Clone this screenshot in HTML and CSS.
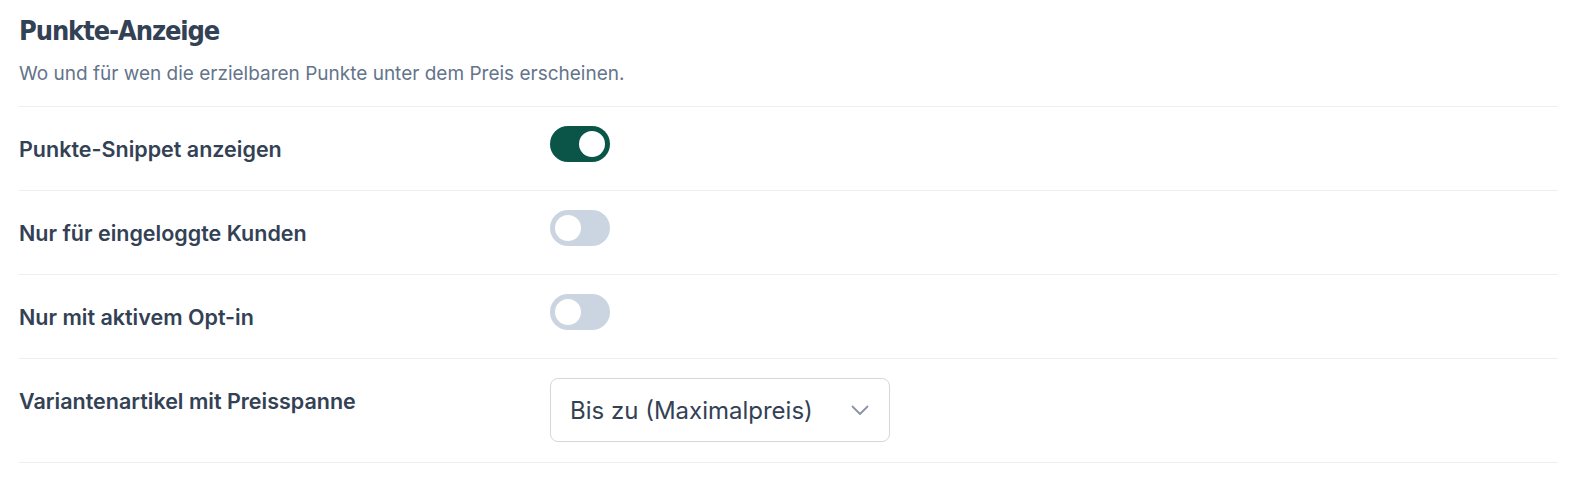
FILE: index.html
```html
<!doctype html>
<html lang="de">
    <head>
        <meta charset="utf-8">
        <meta name="viewport" content="width=device-width, initial-scale=1">
        <title>Punkte-Anzeige</title>
        <link rel="stylesheet" href="styles.css">
    </head>
    <body>
        <section class="einstellungen">
            <header class="kopf">
                <h2>Punkte-Anzeige</h2>
                <p>Wo und für wen die erzielbaren Punkte unter dem Preis erscheinen.</p>
            </header>

            <div class="zeile">
                <label class="beschriftung" for="snippet">Punkte-Snippet anzeigen</label>
                <div class="steuerung">
                    <label class="schalter">
                        <input type="checkbox" id="snippet" checked>
                        <span class="regler"></span>
                    </label>
                </div>
            </div>

            <div class="zeile">
                <label class="beschriftung" for="eingeloggt">Nur für eingeloggte Kunden</label>
                <div class="steuerung">
                    <label class="schalter">
                        <input type="checkbox" id="eingeloggt">
                        <span class="regler"></span>
                    </label>
                </div>
            </div>

            <div class="zeile">
                <label class="beschriftung" for="optin">Nur mit aktivem Opt-in</label>
                <div class="steuerung">
                    <label class="schalter">
                        <input type="checkbox" id="optin">
                        <span class="regler"></span>
                    </label>
                </div>
            </div>

            <div class="zeile">
                <label class="beschriftung" for="spanne">Variantenartikel mit Preisspanne</label>
                <div class="steuerung">
                    <div class="auswahl">
                        <select id="spanne">
                            <option selected>Bis zu (Maximalpreis)</option>
                            <option>Ab (Minimalpreis)</option>
                        </select>
                        <svg class="pfeil" width="24" height="24" viewBox="0 0 24 24" fill="none" stroke="currentColor" stroke-width="1.8" stroke-linecap="round" stroke-linejoin="round">
                            <path d="M4.5 8.5l7.5 7.5 7.5-7.5"/>
                        </svg>
                    </div>
                </div>
            </div>
        </section>
    </body>
</html>
```

FILE: styles.css
```css
:root {
    --text-dunkel: #334155;
    --text-grau: #64748b;
    --linie: #eceef1;
    --gruen: #0a5448;
    --aus: #cbd5e1;
}

body {
    margin: 0;
    padding: 0;
    font-family: Inter, "Noto Sans", sans-serif;
    color: var(--text-dunkel);
    background: #fff;
}

.einstellungen {
    padding: 15px 30px 0 19px;
}

.kopf {
    padding-bottom: 18px;
    border-bottom: 1px solid var(--linie);
}

.kopf h2 {
    margin: 0;
    font-family: "DejaVu Sans Condensed", "DejaVu Sans", sans-serif;
    font-stretch: condensed;
    font-size: 27px;
    font-weight: 700;
    letter-spacing: -1.1px;
    line-height: 32px;
    color: var(--text-dunkel);
}

.kopf p {
    margin: 13px 0 0;
    font-size: 19px;
    line-height: 28px;
    color: var(--text-grau);
}

.zeile {
    display: grid;
    grid-template-columns: 531px 1fr;
    padding: 19px 0 20px;
    border-bottom: 1px solid var(--linie);
}

.beschriftung {
    padding-top: 9px;
    font-size: 21.5px;
    font-weight: 600;
    line-height: 28px;
    color: var(--text-dunkel);
}

.steuerung {
    min-height: 44px;
}

/* Schalter */
.schalter {
    position: relative;
    display: inline-block;
    width: 60px;
    height: 36px;
    cursor: pointer;
}

.schalter input {
    opacity: 0;
    width: 0;
    height: 0;
}

.regler {
    position: absolute;
    inset: 0;
    border-radius: 18px;
    background-color: var(--aus);
    transition: background-color 0.2s;
}

.regler::before {
    content: "";
    position: absolute;
    top: 5px;
    left: 5px;
    width: 26px;
    height: 26px;
    border-radius: 50%;
    background: #fff;
    transition: transform 0.2s;
}

.schalter input:checked + .regler {
    background-color: var(--gruen);
}

.schalter input:checked + .regler::before {
    transform: translateX(24px);
}

/* Auswahlfeld */
.auswahl {
    position: relative;
    width: 340px;
}

.auswahl select {
    appearance: none;
    width: 100%;
    height: 64px;
    padding: 0 60px 0 19px;
    border: 1px solid #d4d7dc;
    border-radius: 8px;
    background: #fff;
    font-family: Inter, "Noto Sans", sans-serif;
    font-size: 24px;
    color: var(--text-dunkel);
}

.auswahl .pfeil {
    position: absolute;
    top: 20px;
    right: 18px;
    color: #8a94a3;
    pointer-events: none;
}
```
